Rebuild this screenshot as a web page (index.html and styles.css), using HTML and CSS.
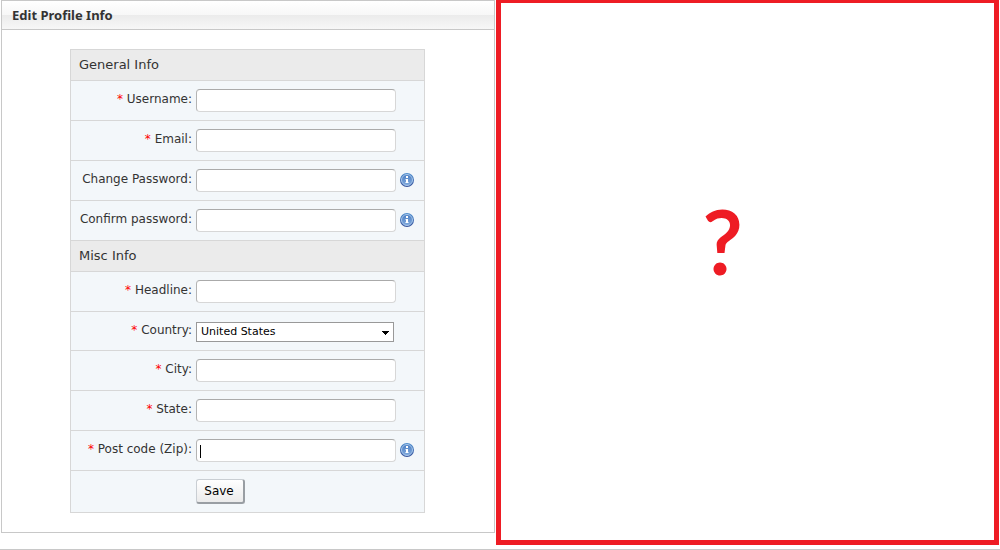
FILE: index.html
```html
<!DOCTYPE html>
<html lang="en">
<head>
    <meta charset="UTF-8">
    <meta name="viewport" content="width=device-width, initial-scale=1.0">
    <title>Edit Profile Info</title>
    <link rel="stylesheet" href="styles.css">
</head>
<body>
    <svg class="defs" aria-hidden="true">
        <linearGradient id="ring" x1="0" y1="0" x2="0" y2="1">
            <stop offset="0" stop-color="#4f8fd0"/>
            <stop offset="1" stop-color="#35509a"/>
        </linearGradient>
        <linearGradient id="disc" x1="0" y1="0" x2="0" y2="1">
            <stop offset="0" stop-color="#4d7fc4"/>
            <stop offset="1" stop-color="#7fa9dc"/>
        </linearGradient>
        <symbol id="info" viewBox="0 0 14 14">
            <circle cx="7" cy="7" r="7" fill="url(#ring)"/>
            <circle cx="7" cy="7" r="5.5" fill="url(#disc)" stroke="#a9c8ea" stroke-width="1"/>
            <path d="M6 3h2v2H6zM5.5 6H8v3.2h.7v.8H5.3v-.8H6V6.800h-.5z" fill="#fff"/>
        </symbol>
    </svg>

    <main class="columns">
        <section class="panel">
            <h1>Edit Profile Info</h1>
            <form class="profile-form">
                <h2>General Info</h2>
                <div class="row">
                    <label for="username"><span class="required">*</span> Username:</label>
                    <input type="text" id="username">
                </div>
                <div class="row">
                    <label for="email"><span class="required">*</span> Email:</label>
                    <input type="email" id="email">
                </div>
                <div class="row">
                    <label for="password">Change Password:</label>
                    <input type="password" id="password">
                    <svg class="info"><use href="#info"/></svg>
                </div>
                <div class="row">
                    <label for="confirm">Confirm password:</label>
                    <input type="password" id="confirm">
                    <svg class="info"><use href="#info"/></svg>
                </div>

                <h2>Misc Info</h2>
                <div class="row">
                    <label for="headline"><span class="required">*</span> Headline:</label>
                    <input type="text" id="headline">
                </div>
                <div class="row">
                    <label for="country"><span class="required">*</span> Country:</label>
                    <select id="country">
                        <option>United States</option>
                    </select>
                </div>
                <div class="row">
                    <label for="city"><span class="required">*</span> City:</label>
                    <input type="text" id="city">
                </div>
                <div class="row">
                    <label for="state"><span class="required">*</span> State:</label>
                    <input type="text" id="state">
                </div>
                <div class="row">
                    <label for="zip"><span class="required">*</span> Post code (Zip):</label>
                    <input type="text" id="zip" class="active">
                    <svg class="info"><use href="#info"/></svg>
                </div>
                <div class="row actions">
                    <button type="submit">Save</button>
                </div>
            </form>
        </section>

        <section class="placeholder">?</section>
    </main>
    <footer></footer>
</body>
</html>
```
FILE: styles.css
```css
* {
    box-sizing: border-box;
}
body {
    margin: 0;
    font-family: Verdana, "DejaVu Sans", sans-serif;
    font-size: 12px;
    line-height: 16px;
    color: #333;
    background-color: #fff;
}
.defs {
    position: absolute;
    width: 0;
    height: 0;
}
.columns {
    display: grid;
    grid-template-columns: 494fr 503fr;
    gap: 1px;
    align-items: start;
    padding: 0 1px 4px;
}
.panel {
    border: 1px solid #c8c8c8;
}
h1 {
    margin: 0;
    padding: 0 10px;
    font-family: Tahoma, "Noto Sans", sans-serif;
    font-size: 13px;
    line-height: 28px;
    border-bottom: 1px solid #c8c8c8;
    background: linear-gradient(#fff, #f7f7f7 50%, #ebebeb 50%, #f7f7f7);
}
.profile-form {
    width: 355px;
    margin: 19px 68px;
    border: 1px solid #d7d7d7;
    background-color: #f3f7fa;
}
h2 {
    margin: 0;
    padding: 0 8px;
    font-size: 13px;
    font-weight: normal;
    line-height: 30px;
    border-bottom: 1px solid #d7d7d7;
    background-color: #ebebeb;
}
.row {
    display: flex;
    align-items: flex-start;
    padding: 8px 0;
    border-bottom: 1px solid #d7d7d7;
}
.row:last-child {
    border-bottom: none;
}
label {
    width: 125px;
    padding: 2px 4px 0 0;
    text-align: right;
    white-space: nowrap;
}
.required {
    color: #f00;
}
input {
    width: 200px;
    height: 23px;
    padding: 0 4px;
    font: inherit;
    border: 1px solid #d7d7d7;
    border-top-color: #aaa;
    border-left-color: #b4b4b4;
    border-radius: 4px;
    background-color: #fff;
}
input.active {
    background: linear-gradient(#000, #000) 3px 5px / 1px 13px no-repeat #fff;
}
select {
    width: 198px;
    height: 20px;
    margin-top: 2px;
    padding: 0 4px;
    font: inherit;
    font-size: 11px;
    color: #000;
    appearance: none;
    border: 1px solid #999;
    border-radius: 0;
    background: #fff url("data:image/svg+xml,%3Csvg xmlns='http://www.w3.org/2000/svg' width='7' height='4' shape-rendering='crispEdges'%3E%3Cpath d='M0 0h7v1H6v1H5v1H4v1H3V3H2V2H1V1H0z'/%3E%3C/svg%3E") no-repeat right 4px top 8px;
}
.info {
    width: 14px;
    height: 14px;
    margin: 4px 0 0 4px;
}
.actions {
    padding-left: 125px;
}
button {
    width: 49px;
    height: 25px;
    padding: 0 2px 0 0;
    font: inherit;
    color: #000;
    border: 1px solid #c9ced3;
    border-right: 2px solid #999ea3;
    border-bottom: 2px solid #999ea3;
    border-radius: 3px;
    background: linear-gradient(#fff, #ebebeb);
}
.placeholder {
    display: flex;
    align-items: center;
    justify-content: center;
    min-height: 545px;
    padding: 0 50px 58px 0;
    font-family: Calibri, Lato, sans-serif;
    font-size: 92px;
    line-height: 1;
    color: #ee1c24;
    -webkit-text-stroke: 2px #ee1c24;
    border: 5px solid #ee1c24;
    border-top-width: 3px;
}
footer {
    border-top: 1px solid #c8c8c8;
}
```
